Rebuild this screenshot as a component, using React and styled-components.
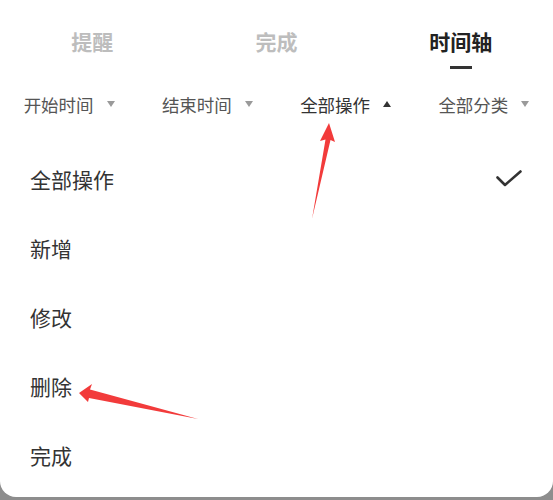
import React, { useState } from 'react';
import styled, { createGlobalStyle } from 'styled-components';

const GlobalStyle = createGlobalStyle`
  html, body {
    margin: 0;
    padding: 0;
    background: #8d8d8d;
  }
  body {
    font-family: "Noto Sans CJK SC", "Noto Sans", sans-serif;
  }
`;

const Page = styled.div`
  width: 553px;
  height: 500px;
  background: #8d8d8d;
  overflow: hidden;
`;

const Sheet = styled.div`
  position: relative;
  height: 497px;
  background: #fff;
  border-radius: 0 0 16px 16px;
`;

const TabBar = styled.div`
  display: grid;
  grid-template-columns: repeat(3, 1fr);
  padding-top: 28px;
`;

const Tab = styled.div`
  display: flex;
  flex-direction: column;
  align-items: center;
  font-size: 21px;
  font-weight: 700;
  line-height: 26px;
  color: ${p => (p.active ? '#222' : '#bdbdbd')};
`;

const Indicator = styled.div`
  width: 22px;
  height: 3px;
  margin-top: 12px;
  background: ${p => (p.active ? '#333' : 'transparent')};
`;

const FilterBar = styled.div`
  display: grid;
  grid-template-columns: repeat(4, 1fr);
  height: 40px;
  margin-top: 15px;
`;

const Filter = styled.div`
  display: flex;
  align-items: center;
  justify-content: center;
  gap: 13px;
  font-size: 17.5px;
  color: ${p => (p.open ? '#333' : '#555')};
`;

const Caret = styled.span`
  width: 0;
  height: 0;
  border-left: 4.5px solid transparent;
  border-right: 4.5px solid transparent;
  ${p =>
    p.up
      ? 'border-bottom: 6px solid #333;'
      : 'border-top: 6px solid #9a9a9a;'}
`;

const Menu = styled.div`
  padding-top: 20px;
`;

const MenuItem = styled.div`
  display: flex;
  align-items: center;
  justify-content: space-between;
  height: 69.2px;
  padding: 0 31px 0 30px;
  font-size: 21px;
  color: #333;
`;

const Annotations = styled.svg`
  position: absolute;
  left: 0;
  top: 0;
  width: 553px;
  height: 497px;
  pointer-events: none;
`;

const tabs = ['提醒', '完成', '时间轴'];
const filters = ['开始时间', '结束时间', '全部操作', '全部分类'];
const actions = ['全部操作', '新增', '修改', '删除', '完成'];

const CheckMark = () => (
  <svg width="26" height="17" viewBox="0 0 26 17">
    <polyline
      points="1.5,7.5 9,15 24.5,1.5"
      fill="none"
      stroke="#333"
      strokeWidth="2.6"
      strokeLinecap="round"
      strokeLinejoin="round"
    />
  </svg>
);

const App = () => {
  const [tab] = useState(2);
  const [selected, setSelected] = useState(0);

  return (
    <Page>
      <GlobalStyle />
      <Sheet>
        <TabBar>
          {tabs.map((t, i) => (
            <Tab key={t} active={i === tab}>
              {t}
              <Indicator active={i === tab} />
            </Tab>
          ))}
        </TabBar>
        <FilterBar>
          {filters.map((f, i) => (
            <Filter key={f} open={i === 2}>
              {f}
              <Caret up={i === 2} />
            </Filter>
          ))}
        </FilterBar>
        <Menu>
          {actions.map((a, i) => (
            <MenuItem key={a} onClick={() => setSelected(i)}>
              {a}
              {i === selected && <CheckMark />}
            </MenuItem>
          ))}
        </Menu>
        <Annotations viewBox="0 0 553 497">
          <polygon
            fill="#f23b3b"
            points="329,123 335,142 330.5,140 312,219 325.5,139.5 320,141"
          />
          <polygon
            fill="#f23b3b"
            points="79,393 92,384 90,389.5 198,419 89,398 88,402"
          />
        </Annotations>
      </Sheet>
    </Page>
  );
};

export default App;
